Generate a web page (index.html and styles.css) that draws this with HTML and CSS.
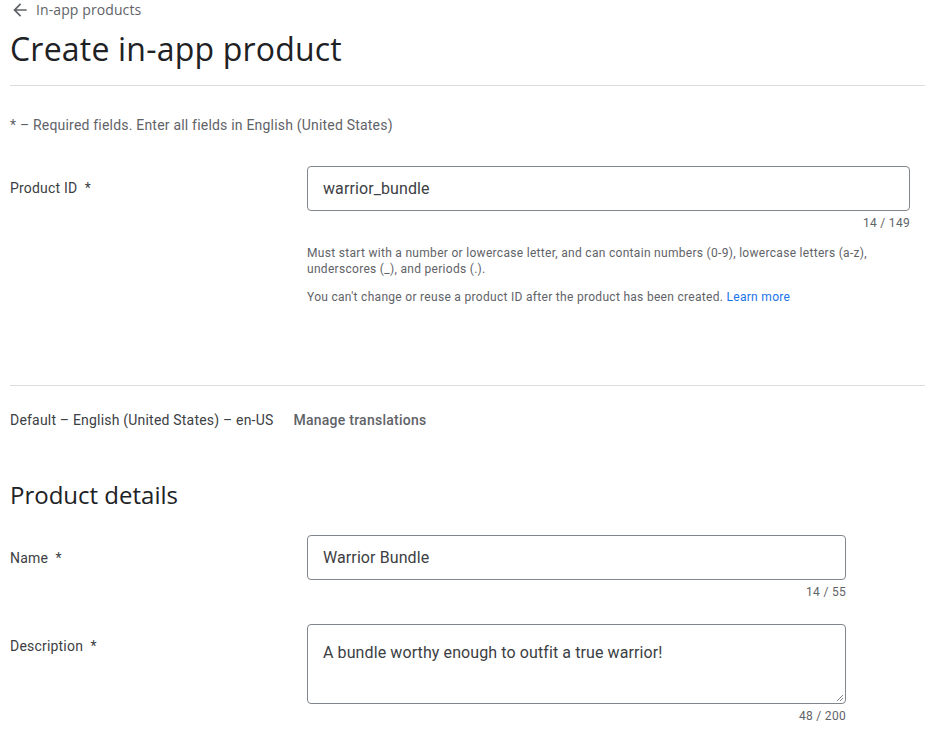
FILE: index.html
```html
<!DOCTYPE html>
<html>
<head>
<meta charset="utf-8">
<link rel="stylesheet" href="styles.css">
</head>
<body>
<div class="page">
  <a class="back" href="#">
    <svg class="back-icon" width="20" height="20" viewBox="0 0 24 24"><path d="M20 11H7.83l5.59-5.59L12 4l-8 8 8 8 1.41-1.41L7.83 13H20v-2z" fill="#5f6368"/></svg>
    <span>In-app products</span>
  </a>
  <h1 class="title">Create in-app product</h1>
  <hr class="divider">
  <p class="required">* – Required fields. Enter all fields in English (United States)</p>

  <div class="row row-id">
    <div class="label">Product ID &nbsp;*</div>
    <div class="field field-wide">
      <div class="input">warrior_bundle</div>
      <div class="counter">14 / 149</div>
      <p class="help">Must start with a number or lowercase letter, and can contain numbers (0-9), lowercase letters (a-z), underscores (_), and periods (.).</p>
      <p class="help">You can't change or reuse a product ID after the product has been created. <a class="link" href="#">Learn more</a></p>
    </div>
  </div>

  <hr class="divider divider-2">
  <div class="lang">
    <span>Default – English (United States) – en-US</span>
    <a class="manage" href="#">Manage translations</a>
  </div>

  <h2 class="section">Product details</h2>

  <div class="row row-name">
    <div class="label">Name &nbsp;*</div>
    <div class="field">
      <div class="input">Warrior Bundle</div>
      <div class="counter">14 / 55</div>
    </div>
  </div>

  <div class="row row-desc">
    <div class="label">Description &nbsp;*</div>
    <div class="field">
      <div class="input textarea">A bundle worthy enough to outfit a true warrior!
        <svg class="grip" width="8" height="8" viewBox="0 0 8 8"><path d="M7 1L1 7M7 4L4 7" stroke="#80868b" stroke-width="1"/></svg>
      </div>
      <div class="counter">48 / 200</div>
    </div>
  </div>
</div>
</body>
</html>
```

FILE: styles.css
```css
* { box-sizing: border-box; }
html, body { margin: 0; padding: 0; background: #fff; }
body {
  font-family: Roboto, "Liberation Sans", Arial, sans-serif;
  color: #3c4043;
  font-size: 14px;
  letter-spacing: 0.2px;
}
.page { padding: 0 0 0 10px; }
.back {
  display: flex;
  align-items: center;
  gap: 6px;
  height: 20px;
  padding-left: 0;
  color: #5f6368;
  text-decoration: none;
  font-size: 14px;
  font-weight: 500;
  font-family: "Open Sans", Roboto, sans-serif;
  letter-spacing: 0.1px;
  margin-top: 0;
}
.back span { line-height: 20px; }
.title {
  margin: 9px 0 0;
  font-family: "Open Sans", Roboto, sans-serif;
  font-weight: 400;
  font-size: 32px;
  line-height: 40px;
  color: #202124;
  letter-spacing: 0.2px;
}
.divider {
  border: 0;
  border-top: 1px solid #dadce0;
  margin: 16px 0 0;
  height: 0;
}
.required {
  margin: 29px 0 0;
  line-height: 20px;
  color: #5f6368;
}
.row {
  display: flex;
  align-items: flex-start;
}
.label {
  width: 297px;
  flex: none;
  line-height: 20px;
  color: #3c4043;
  padding-top: 12px;
}
.row-id { margin-top: 31px; }
.field { width: 539px; }
.field-wide { width: 603px; }
.input {
  height: 45px;
  border: 1px solid #80868b;
  border-radius: 4px;
  padding: 0 15px;
  font-size: 16px;
  line-height: 43px;
  color: #3c4043;
  letter-spacing: 0.1px;
}
.textarea {
  position: relative;
  height: 80px;
  line-height: 20px;
  padding-top: 18px;
}
.grip { position: absolute; right: 1px; bottom: 1px; }
.counter {
  text-align: right;
  font-size: 12px;
  line-height: 16px;
  color: #5f6368;
  margin-top: 4px;
  letter-spacing: 0.3px;
}
.help {
  margin: 14px 0 0;
  font-size: 12px;
  line-height: 16px;
  color: #5f6368;
  letter-spacing: 0.3px;
}
.help + .help { margin-top: 12px; }
.link { color: #1a73e8; text-decoration: none; }
.divider-2 { margin-top: 80px; }
.lang {
  margin-top: 24px;
  display: flex;
  gap: 20px;
  line-height: 20px;
}
.manage {
  color: #5f6368;
  font-weight: 500;
  text-decoration: none;
  font-family: Roboto, sans-serif;
  font-size: 14px;
  letter-spacing: 0.25px;
}
.section {
  margin: 50px 0 0;
  font-family: "Open Sans", Roboto, sans-serif;
  font-weight: 400;
  font-size: 24px;
  line-height: 30px;
  color: #202124;
  letter-spacing: 0;
}
.row-name { margin-top: 25px; }
.row-name .label { padding-top: 13px; }
.row-desc { margin-top: 24px; }
.row-desc .label { padding-top: 12px; }
```
